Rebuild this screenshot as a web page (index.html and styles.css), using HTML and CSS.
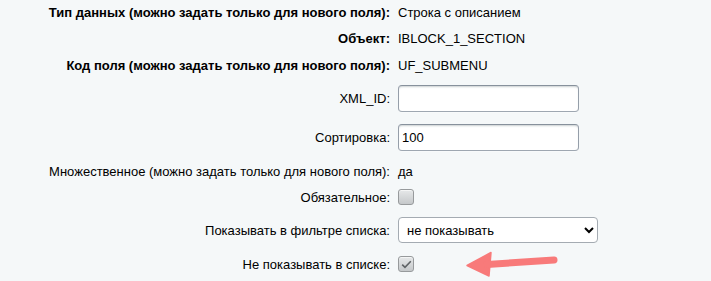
FILE: index.html
```html
<!DOCTYPE html>
<html lang="ru">
<head>
    <meta charset="UTF-8">
    <title>Пользовательское поле</title>
    <link rel="stylesheet" href="styles.css">
</head>
<body>
    <div class="form">
        <div class="label bold">Тип данных (можно задать только для нового поля):</div>
        <div class="value">Строка с описанием</div>

        <div class="label bold">Объект:</div>
        <div class="value">IBLOCK_1_SECTION</div>

        <div class="label bold">Код поля (можно задать только для нового поля):</div>
        <div class="value">UF_SUBMENU</div>

        <div class="label">XML_ID:</div>
        <div class="value"><input type="text" class="field" value=""></div>

        <div class="label">Сортировка:</div>
        <div class="value"><input type="text" class="field" value="100"></div>

        <div class="label">Множественное (можно задать только для нового поля):</div>
        <div class="value">да</div>

        <div class="label">Обязательное:</div>
        <div class="value"><span class="check"></span></div>

        <div class="label">Показывать в фильтре списка:</div>
        <div class="value">
            <select class="dropdown">
                <option>не показывать</option>
                <option>простой фильтр</option>
            </select>
        </div>

        <div class="label">Не показывать в списке:</div>
        <div class="value">
            <span class="check">
                <svg width="11" height="9" viewBox="0 0 11 9"><path d="M1.2 4.6 L4 7.4 L9.8 1.2" fill="none" stroke="#5f6366" stroke-width="1.6"/></svg>
            </span>
        </div>
    </div>

    <!-- pointer drawn over the screenshot -->
    <svg class="pointer" width="110" height="36" viewBox="460 246 110 36">
        <path d="M467 265.5 L491 252.5 L489 276 Z" fill="#f87a7a" stroke="#f87a7a" stroke-width="1.5" stroke-linejoin="round"/>
        <path d="M487 264.5 L554 260" fill="none" stroke="#f87a7a" stroke-width="7" stroke-linecap="round"/>
    </svg>
</body>
</html>
```

FILE: styles.css
```css
body {
    margin: 0;
    background-color: #f5f8f9;
    font-family: "Liberation Sans", Arial, sans-serif;
    font-size: 13px;
    color: #000;
}

.form {
    display: grid;
    grid-template-columns: 390px 1fr;
    grid-template-rows: 25px 27px 26px 40px 39px 28px 24px 42px 26px;
    column-gap: 8px;
}

.label {
    display: flex;
    align-items: center;
    justify-content: flex-end;
    white-space: nowrap;
}

.bold {
    font-weight: bold;
}

.value {
    display: flex;
    align-items: center;
}

.field {
    box-sizing: border-box;
    width: 181px;
    height: 27px;
    padding: 0 3px;
    font-family: "Liberation Sans", Arial, sans-serif;
    font-size: 13px;
    color: #000;
    background: #fff;
    border: 1px solid;
    border-color: #87919c #959ea9 #9ea7b1 #959ea9;
    border-radius: 4px;
    box-shadow: 0 1px 0 0 rgba(255, 255, 255, 0.3), inset 0 2px 2px -1px rgba(180, 188, 191, 0.7);
    outline: none;
}

.dropdown {
    box-sizing: border-box;
    width: 200px;
    height: 26px;
    padding: 0 4px;
    font-family: "Liberation Sans", Arial, sans-serif;
    font-size: 13px;
    color: #000;
    background: #fff;
    border: 1px solid #a4abb2;
    border-radius: 4px;
}

.check {
    box-sizing: border-box;
    display: flex;
    align-items: center;
    justify-content: center;
    width: 16px;
    height: 16px;
    border: 1px solid #979a9c;
    border-radius: 3px;
    background: linear-gradient(to bottom, #e6e8e9, #c5c8ca);
    box-shadow: inset 0 1px 0 #f4f5f5;
}

.pointer {
    position: absolute;
    left: 460px;
    top: 246px;
}
```
